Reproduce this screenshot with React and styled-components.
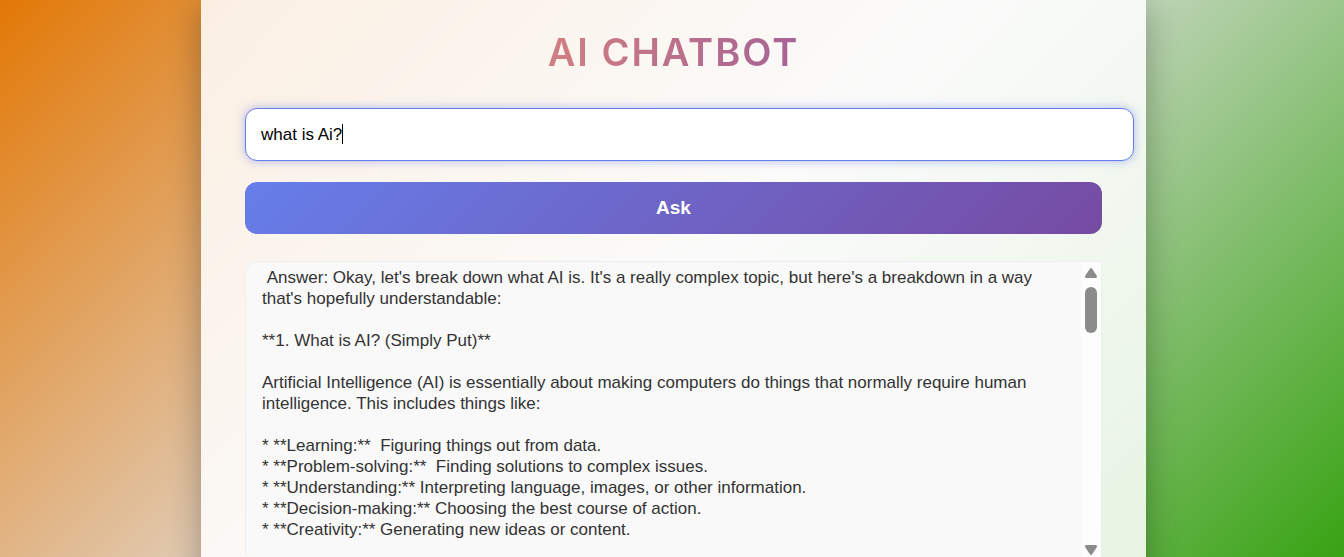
import React, { useState } from "react";
import styled, { createGlobalStyle } from "styled-components";

const GlobalStyle = createGlobalStyle`
  * { box-sizing: border-box; }
  body {
    margin: 0;
    font-family: "Liberation Sans", Arial, sans-serif;
  }
`;

const Page = styled.div`
  height: 100vh;
  overflow: hidden;
  display: flex;
  justify-content: center;
  align-items: flex-start;
  padding: 0 198px 0 201px;
  background: linear-gradient(135deg, #e27806 0%, #e0e0e0 50%, #38a313 100%);
`;

const Panel = styled.main`
  flex: 1;
  max-width: 960px;
  min-height: 100vh;
  padding: 24px 44px 44px;
  display: flex;
  flex-direction: column;
  background: rgba(255, 255, 255, 0.86);
  box-shadow: 0 8px 32px rgba(0, 0, 0, 0.3);
`;

const Title = styled.h1`
  align-self: center;
  margin: 0 0 28px;
  font-family: Inter, "Open Sans", sans-serif;
  font-size: 38px;
  line-height: 56px;
  font-weight: 600;
  letter-spacing: 2px;
  color: transparent;
  background: linear-gradient(100deg, #d27f80, #a56296);
  background-clip: text;
`;

const Form = styled.form`
  display: flex;
  flex-direction: column;
  gap: 21px;
`;

const Field = styled.label`
  position: relative;
  display: block;
  margin-right: -32px;
  font-size: 17px;
`;

const Question = styled.input`
  display: block;
  width: 100%;
  height: 53px;
  padding: 0 15px;
  border: 1px solid #667eea;
  border-radius: 12px;
  outline: none;
  background: #fff;
  color: #000;
  font: inherit;
  caret-color: transparent;
  box-shadow: 0 0 10px rgba(102, 126, 234, 0.5);
`;

const Caret = styled.span`
  position: absolute;
  top: 16px;
  left: 16px;
  height: 20px;
  border-right: 1px solid #000;
  color: transparent;
  white-space: pre;
  pointer-events: none;
`;

const AskButton = styled.button`
  height: 52px;
  border: 0;
  border-radius: 12px;
  background: linear-gradient(135deg, #667eea, #764ba2);
  color: #fff;
  font: bold 19px "Liberation Sans", Arial, sans-serif;
`;

const Answer = styled.section`
  display: flex;
  height: 301px;
  margin-top: 27px;
  border: 1px solid #eee;
  border-radius: 12px 0 0 12px;
  background: #f9f9f9;
  overflow: hidden;
`;

const AnswerText = styled.div`
  flex: 1;
  padding: 5px 16px;
  overflow: hidden;
  color: #333;
  font-size: 17px;
  line-height: 21px;
  white-space: pre-wrap;
`;

const ScrollBar = styled.div`
  width: 20px;
  padding: 6px 4px;
  display: flex;
  flex-direction: column;
  background: #fdfdfd;
`;

const ScrollArrow = styled.svg`
  display: block;
  width: 12px;
  height: 10px;
  fill: #8b8b8b;
`;

const ScrollTrack = styled.div`
  flex: 1;
  padding-top: 9px;
`;

const ScrollThumb = styled.div`
  height: 46px;
  border-radius: 6px;
  background: #8b8b8b;
`;

const answer = ` Answer: Okay, let's break down what AI is. It's a really complex topic, but here's a breakdown in a way that's hopefully understandable:

**1. What is AI? (Simply Put)**

Artificial Intelligence (AI) is essentially about making computers do things that normally require human intelligence. This includes things like:

* **Learning:**  Figuring things out from data.
* **Problem-solving:**  Finding solutions to complex issues.
* **Understanding:** Interpreting language, images, or other information.
* **Decision-making:** Choosing the best course of action.
* **Creativity:** Generating new ideas or content.`;

export default function App() {
  const [question, setQuestion] = useState("what is Ai?");
  return (
    <>
      <GlobalStyle />
      <Page>
        <Panel>
          <Title>AI CHATBOT</Title>
          <Form onSubmit={(e) => e.preventDefault()}>
            <Field>
              <Question
                type="text"
                aria-label="Question"
                value={question}
                onChange={(e) => setQuestion(e.target.value)}
              />
              <Caret aria-hidden="true">{question}</Caret>
            </Field>
            <AskButton type="submit">Ask</AskButton>
          </Form>
          <Answer>
            <AnswerText>{answer}</AnswerText>
            <ScrollBar aria-hidden="true">
              <ScrollArrow viewBox="0 0 12 10">
                <path d="M4.7 1Q6 -.8 7.3 1L11.6 7.6Q12.6 10 10.6 10H1.4Q-.6 10 .4 7.6Z" />
              </ScrollArrow>
              <ScrollTrack>
                <ScrollThumb />
              </ScrollTrack>
              <ScrollArrow viewBox="0 0 12 10">
                <path d="M4.7 9Q6 10.8 7.3 9L11.6 2.4Q12.6 0 10.6 0H1.4Q-.6 0 .4 2.4Z" />
              </ScrollArrow>
            </ScrollBar>
          </Answer>
        </Panel>
      </Page>
    </>
  );
}
